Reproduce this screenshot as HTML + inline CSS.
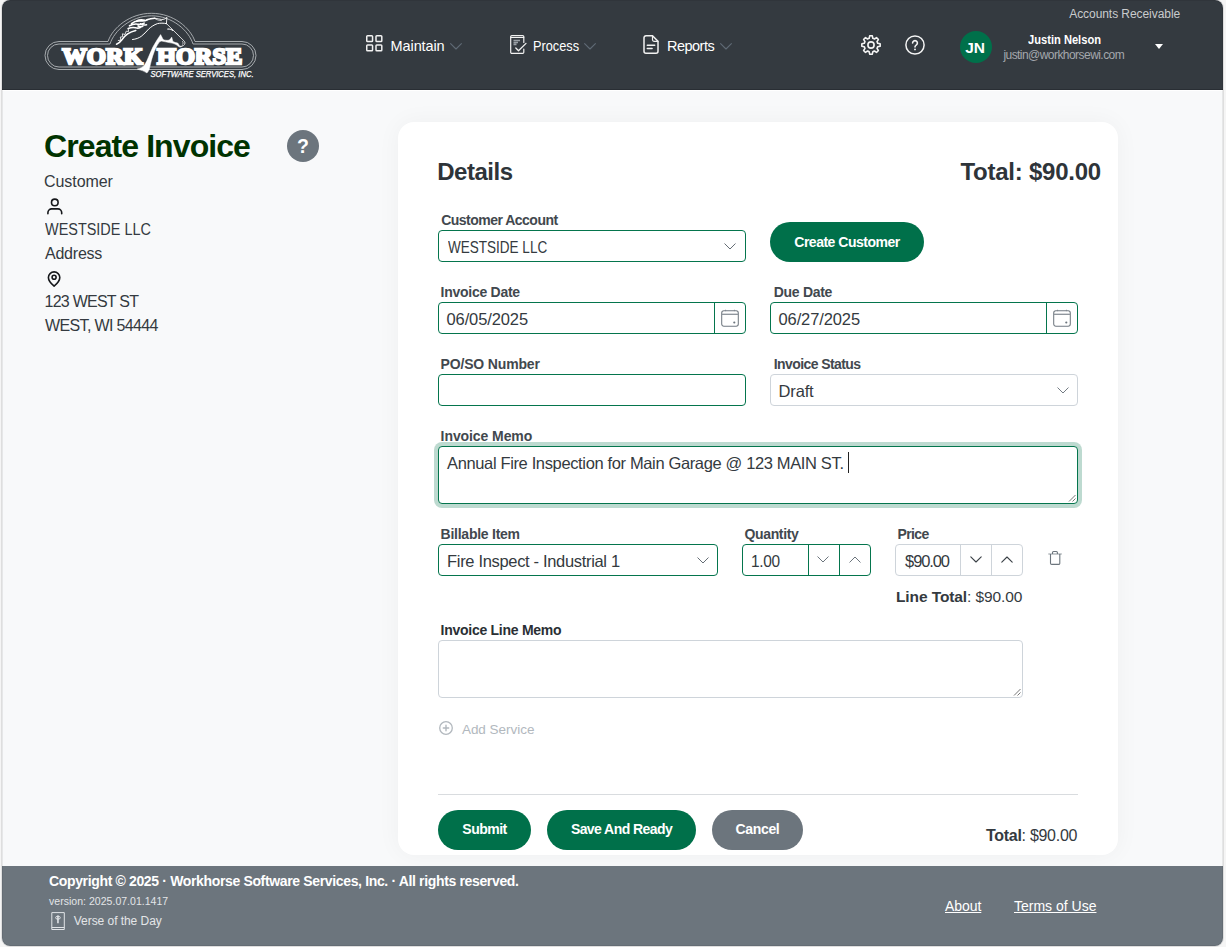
<!DOCTYPE html>
<html lang="en">
<head>
<meta charset="utf-8">
<title>Create Invoice</title>
<style>
*{box-sizing:border-box;margin:0;padding:0}
html,body{width:1226px;height:947px;overflow:hidden;background:#f5f5f5}
body{font-family:"Liberation Sans",sans-serif;color:#343a40;position:relative}
.abs{position:absolute}
.t{position:absolute;white-space:nowrap;line-height:1}
#win{position:absolute;left:2px;top:0;width:1221px;height:946px;background:#f8f9fa;border-radius:8px;overflow:hidden;box-shadow:0 0 0 1px rgba(0,0,0,.09)}
#hdr{position:absolute;left:2px;top:0;width:1221px;height:90px;background:#343a40;border-bottom:1px solid #292e34}
#ftr{position:absolute;left:2px;top:866px;width:1221px;height:80px;background:#6c757d}
#card{position:absolute;left:398px;top:122px;width:720px;height:733px;background:#fff;border-radius:16px;box-shadow:0 0 24px rgba(0,0,0,.045)}
.lbl{position:absolute;white-space:nowrap;line-height:1;font-size:14px;margin-top:0px;font-weight:bold;color:#42484e}
.box{position:absolute;height:32px;border:1px solid #04754d;border-radius:4px;background:#fff}
.box.g{border-color:#ced4da}
.val{position:absolute;white-space:nowrap;line-height:1;font-size:16.5px;margin-top:0.3px;color:#343a40}
.btn{position:absolute;height:40px;border-radius:20px;background:#00704a;color:#fff;font-weight:bold;font-size:14px;text-align:center;line-height:40px;white-space:nowrap}
.btn.gray{background:#6c757d}
.dv{position:absolute;top:0;width:1px;height:30px;background:#04754d}
.g .dv{background:#ced4da}
svg{position:absolute;overflow:visible}
.lp{font-size:16px;color:#343a40}
.nv{font-size:14.500px;color:#fff}
</style>
</head>
<body>
<div id="win"><div id="o" style="position:absolute;left:-2px;top:0;width:1226px;height:947px">
  <div id="hdr">
    <!-- LOGO -->
    <div id="ho" style="position:absolute;left:-2px;top:0;width:1226px;height:90px">
    <svg id="logo" style="left:0;top:0" width="300" height="90" viewBox="0 0 300 90">
      <g fill="none" stroke="#c3c6c9" stroke-width="0.8">
        <path d="M59 41.500H108C112.500 28 129.500 13.300 151.500 13.300S190.500 28 195 41.500H242a14 14 0 0 1 0 28H59a14 14 0 0 1 0-28z"/>
        <path d="M59 44H110C114 31 130.500 15.800 151.500 15.800S189 31 193 44H242a11.500 11.500 0 0 1 0 23H59a11.500 11.500 0 0 1 0-23z"/>
      </g>
      <text x="62.200" y="64" font-family="Liberation Serif" font-weight="bold" font-size="23.400" fill="#fff" stroke="#fff" stroke-width="2.400" stroke-linejoin="miter" textLength="80.600" lengthAdjust="spacingAndGlyphs">WORK</text>
      <text x="157" y="64" font-family="Liberation Serif" font-weight="bold" font-size="23.400" fill="#fff" stroke="#fff" stroke-width="2.400" stroke-linejoin="miter" textLength="85.200" lengthAdjust="spacingAndGlyphs">HORSE</text>
      <text x="150.500" y="77.200" font-family="Liberation Sans" font-style="italic" font-size="8.200" fill="#fff" stroke="#fff" stroke-width="0.250" textLength="103" lengthAdjust="spacingAndGlyphs">SOFTWARE SERVICES, INC.</text>
      <!-- horse -->
      <g fill="#fff" stroke="#fff" stroke-width="0.500" stroke-linejoin="round">
        <path d="M160.600 34.600L163.100 39.400C165 40.400 167.200 40.500 169.100 40.100C170.300 39.300 171.100 38.300 171.700 37.100L172.900 41.600C174.600 42.400 176.500 42.700 178 43.200L179.600 46C180.600 46.300 181.500 46.300 182.300 46L181 46.900C180.200 47.200 179.300 47.100 178.600 46.600C177.400 45.600 176.300 44.700 175 44.100C173.100 43.300 171.100 42.900 169.100 42.600C166.600 42.200 164.100 41.400 161.700 41.100C160.400 41.200 159.500 41.800 158.800 42.700C156.900 45.400 155.500 48.400 154.300 51.500C153.100 54.500 152.200 57.400 151.400 60.400C150.600 63.300 149.900 66.200 149.300 69.100C148.800 70.600 148.100 71.900 147 72.900C144.200 71.200 140.900 70 137.300 69.100C140.200 68.600 143 67.300 144.700 64.700C146.300 62.400 147.400 59.900 148.400 57.300C149.800 53.800 151.300 50.400 152.900 47C154.300 44.500 155.800 42 157.300 39.600C158.500 37.900 159.600 36.200 160.600 34.600z"/>
      </g>
      <g fill="none" stroke="#fff" stroke-linecap="round" stroke-linejoin="round">
        <path d="M132.500 39.500C136 39.200 138.800 38 141.200 36.400C144 34.400 146.200 31.600 148.600 29.100C151.200 26.700 154.100 24.800 157.500 23.600C160.300 23 163.400 23 166.400 23.600" stroke-width="1"/>
        <path d="M166.500 23.600L184.400 41.300C185.200 42.300 185.100 43.700 184.300 44.700C183.800 45.400 183.100 45.900 182.300 46" stroke-width="0.800"/>
        <path d="M182.600 41.400C183.300 42.200 183.300 43.300 182.700 44.200" stroke-width="0.700"/>
        <path d="M166.400 23.800L166.900 17.400C165.500 18.800 163.600 19.600 161.700 19.500C159.400 19.100 157.200 18.600 154.900 18.300" stroke-width="0.900"/>
        <path d="M167.800 29.100C169.500 28.800 171.300 29.200 172.700 30.400" stroke-width="1.100"/>
        <path d="M116.500 44.300C118.800 43.300 120.400 41.800 121.700 40C123.300 37.600 125.200 35.600 127.600 33.900C130 32.300 132.700 31.100 135.800 30.400" stroke-width="1.500"/>
        <path d="M118.300 40.500L120.800 40.200L120.300 37L122.600 36.800L122.400 33.800L125 34.500L126.200 31.200L128.600 31.500L128.200 28.500" stroke-width="0.800"/>
        <path d="M128.200 28.400C130.600 27.600 133.200 27.300 135.600 27.800C137.300 28.300 139.100 28.100 140.600 27.200M129.500 25.800C132 24.400 134.900 23.700 137.800 24.200C140 24.600 142.300 24.200 144.200 23.100M131.500 23.500C134 21.500 137.300 20.600 140.500 20.900C142.900 21.300 145.300 21 147.500 19.900M136.500 21C139 19.700 142.200 19.500 145 20.300M146.800 19.800C149.400 19 152.200 18.500 154.900 18.300M140.700 23.800C142.400 25 144.500 25.300 146.500 24.700M138 26C139.500 26.800 141.200 26.800 142.700 26.200" stroke-width="1.600"/>
        <path d="M154.600 18.400C156.700 19.800 158.900 20.600 161.500 20.600" stroke-width="0.700"/>
      </g>
    </svg>
    <!-- NAV -->
    <svg style="left:366px;top:35px" width="17" height="17" viewBox="0 0 17 17" fill="none" stroke="#f1f1f1" stroke-width="1.500"><rect x="0.750" y="0.750" width="5.800" height="5.800" rx="0.800"/><rect x="10" y="0.750" width="5.800" height="5.800" rx="0.800"/><rect x="0.750" y="10" width="5.800" height="5.800" rx="0.800"/><rect x="10" y="10" width="5.800" height="5.800" rx="0.800"/></svg>
    <div class="t nv" id="n1" style="left:390.6px;top:39px;letter-spacing:-0.11px">Maintain</div>
    <svg style="left:450px;top:43px" width="12" height="7" viewBox="0 0 12 7" fill="none" stroke="#5f6a75" stroke-width="1.1" stroke-linecap="round" stroke-linejoin="round"><path d="M0.600 0.600L6 6l5.400-5.400"/></svg>
    <svg style="left:510px;top:35px" width="17" height="19" viewBox="0 0 17 19" fill="none" stroke="#f1f1f1" stroke-width="1.200" stroke-linecap="round" stroke-linejoin="round"><path d="M13.800 7.500V1.800a1.100 1.100 0 0 0-1.100-1.100H1.800a1.100 1.100 0 0 0-1.100 1.100v15.400a1.100 1.100 0 0 0 1.100 1.100h10.900a1.100 1.100 0 0 0 1.100-1.100V14"/><path d="M0.700 2.500h13.100" stroke-width="1"/><path d="M3.500 5.500h6.500M3.500 7.500h4.500M3.500 9.300h3" stroke="#9aa0a6" stroke-width="1.700" stroke-linecap="butt"/><path d="M5.800 13l2.700 2.700l7.500-7.300" stroke-width="1.300"/></svg>
    <div class="t nv" id="n2" style="left:532.5px;top:39px;transform-origin:0 50%;transform:scaleX(0.8806)">Process</div>
    <svg style="left:584px;top:43px" width="12" height="7" viewBox="0 0 12 7" fill="none" stroke="#5f6a75" stroke-width="1.1" stroke-linecap="round" stroke-linejoin="round"><path d="M0.600 0.600L6 6l5.400-5.400"/></svg>
    <svg style="left:643px;top:35px" width="16" height="19" viewBox="0 0 16 19" fill="none" stroke="#f1f1f1" stroke-width="1.500" stroke-linecap="round" stroke-linejoin="round"><path d="M9.500 0.800H3a2 2 0 0 0-2 2v13.400a2 2 0 0 0 2 2h10a2 2 0 0 0 2-2V6.300z"/><path d="M9.500 0.800v4a1.500 1.500 0 0 0 1.500 1.500h4" stroke-width="1.200"/><path d="M4.300 10.200h7.400M4.300 13.600h4.800" stroke-width="1.500"/></svg>
    <div class="t nv" id="n3" style="left:667.0px;top:39px;letter-spacing:-0.52px">Reports</div>
    <svg style="left:720px;top:43px" width="12" height="7" viewBox="0 0 12 7" fill="none" stroke="#5f6a75" stroke-width="1.1" stroke-linecap="round" stroke-linejoin="round"><path d="M0.600 0.600L6 6l5.400-5.400"/></svg>
    <!-- USER -->
    <svg style="left:861px;top:35px" width="20" height="20" viewBox="0 0 20 20" fill="none" stroke="#f4f4f4" stroke-width="1.600" stroke-linejoin="round"><path d="M8.18 3.34L8.70 0.89A9.20 9.20 0 0 1 11.30 0.89L11.82 3.34A6.90 6.90 0 0 1 13.42 4.01L15.52 2.64A9.20 9.20 0 0 1 17.36 4.48L15.99 6.58A6.90 6.90 0 0 1 16.66 8.18L19.11 8.70A9.20 9.20 0 0 1 19.11 11.30L16.66 11.82A6.90 6.90 0 0 1 15.99 13.42L17.36 15.52A9.20 9.20 0 0 1 15.52 17.36L13.42 15.99A6.90 6.90 0 0 1 11.82 16.66L11.30 19.11A9.20 9.20 0 0 1 8.70 19.11L8.18 16.66A6.90 6.90 0 0 1 6.58 15.99L4.48 17.36A9.20 9.20 0 0 1 2.64 15.52L4.01 13.42A6.90 6.90 0 0 1 3.34 11.82L0.89 11.30A9.20 9.20 0 0 1 0.89 8.70L3.34 8.18A6.90 6.90 0 0 1 4.01 6.58L2.64 4.48A9.20 9.20 0 0 1 4.48 2.64L6.58 4.01A6.90 6.90 0 0 1 8.18 3.34Z"/><circle cx="10" cy="10" r="3.100"/></svg>
    <svg style="left:905px;top:35px" width="20" height="20" viewBox="0 0 20 20" fill="none" stroke="#f4f4f4" stroke-width="1.500" stroke-linecap="round"><circle cx="10" cy="10" r="9.100"/><path d="M7.600 8a2.400 2.400 0 1 1 3.600 2.100c-0.800 0.500-1.200 0.900-1.200 1.900" stroke-width="1.600"/><circle cx="10" cy="14.400" r="0.950" fill="#f4f4f4" stroke="none"/></svg>
    <div class="abs" style="left:960px;top:31px;width:32px;height:32px;border-radius:16px;background:#00704a"></div>
    <div class="t" id="jn" style="left:965.300px;top:40px;font-size:15.500px;font-weight:bold;color:#fff;letter-spacing:-0.2px">JN</div>
    <div class="t" id="u0" style="left:1069.2px;top:8px;font-size:12px;color:#c9cbcd;letter-spacing:-0.06px">Accounts Receivable</div>
    <div class="t" id="u1" style="left:1028.2px;top:33px;font-size:13px;font-weight:bold;color:#fff;transform-origin:0 50%;transform:scaleX(0.8565)">Justin Nelson</div>
    <div class="t" id="u2" style="left:1003.4px;top:49px;font-size:12px;color:#a4a8ad;letter-spacing:-0.55px">justin@workhorsewi.com</div>
    <svg style="left:1155px;top:44px" width="8" height="5" viewBox="0 0 8 5"><path d="M0 0h8L4 5z" fill="#fff"/></svg>
    </div>
  </div>

  <!-- LEFT -->
  <div class="t" id="h1" style="left:44.1px;top:130px;font-size:32px;font-weight:bold;color:#003300;letter-spacing:-0.92px">Create Invoice</div>
  <div class="abs" style="left:287px;top:130px;width:32px;height:32px;border-radius:16px;background:#6c757d"></div>
  <div class="t" id="q1" style="left:296.900px;top:137px;font-size:19.500px;font-weight:bold;color:#fff">?</div>
  <div class="t lp" id="l1" style="left:44.0px;top:174px;letter-spacing:-0.06px">Customer</div>
  <svg style="left:0;top:0" width="100" height="300" viewBox="0 0 100 300" fill="none" stroke="#16181b" stroke-width="1.600" stroke-linecap="round" stroke-linejoin="round"><circle cx="54.800" cy="202.400" r="3.300"/><path d="M47.900 213.800v-1.100a3.800 3.800 0 0 1 3.800-3.800h6.200a3.800 3.800 0 0 1 3.800 3.800v1.100"/></svg>
  <div class="t lp" id="l2" style="left:44.6px;top:222px;transform-origin:0 50%;transform:scaleX(0.9026)">WESTSIDE LLC</div>
  <div class="t lp" id="l3" style="left:45.0px;top:246px;letter-spacing:-0.23px">Address</div>
  <svg style="left:0;top:0" width="100" height="300" viewBox="0 0 100 300" fill="none" stroke="#16181b" stroke-width="1.600" stroke-linecap="round" stroke-linejoin="round"><path d="M54.100 286.200C54.100 286.200 48.400 281.600 48.400 277.600a5.700 5.700 0 0 1 11.400 0C59.800 281.600 54.100 286.200 54.100 286.200z"/><circle cx="54.100" cy="277.300" r="2"/></svg>
  <div class="t lp" id="l4" style="left:44.6px;top:294px;letter-spacing:-0.76px">123 WEST ST</div>
  <div class="t lp" id="l5" style="left:45.0px;top:318px;letter-spacing:-0.64px">WEST, WI 54444</div>

  <div id="card">
    <!-- FORM -->
    <div id="ci" style="position:absolute;left:-398px;top:-122px;width:1226px;height:947px">
    <div class="t" id="c1" style="left:437.2px;top:160px;font-size:24px;font-weight:bold;color:#2e3439;letter-spacing:-0.47px">Details</div>
    <div class="t" id="c2" style="left:960.4px;top:160px;font-size:24px;font-weight:bold;color:#2e3439;letter-spacing:-0.24px">Total: $90.00</div>

    <div class="lbl" id="b1" style="left:441.2px;top:213px;letter-spacing:-0.52px">Customer Account</div>
    <div class="box" style="left:438px;top:230px;width:308px"></div>
    <div class="val" id="v1" style="left:447.8px;top:239px;transform-origin:0 50%;transform:scaleX(0.8194)">WESTSIDE LLC</div>
    <svg style="left:724.4px;top:242.6px" width="12" height="7" viewBox="0 0 12 7" fill="none" stroke="#656d75" stroke-width="1" stroke-linecap="round" stroke-linejoin="round"><path d="M0.800 0.800L6 6l5.200-5.200"/></svg>
    <div class="btn" id="bt1" style="left:770px;top:222px;width:154px;letter-spacing:-0.49px">Create Customer</div>

    <div class="lbl" id="b2" style="left:440.6px;top:285px;letter-spacing:-0.27px">Invoice Date</div>
    <div class="box" style="left:438px;top:302px;width:308px"><div class="dv" style="left:275px"></div></div>
    <div class="val" id="v2" style="left:446.5px;top:311px;letter-spacing:-0.11px">06/05/2025</div>
    <svg style="left:721px;top:309px" width="18" height="18" viewBox="0 0 18 18" fill="none" stroke="#727a82" stroke-width="1.050" stroke-linecap="round"><rect x="0.700" y="1.800" width="16.600" height="15.500" rx="2.200"/><path d="M0.700 5.300h16.600" stroke="#8a9198" stroke-width="1.300" stroke-linecap="butt"/><path d="M4.600 0.900v0.900M13.400 0.900v0.900" stroke-opacity="0.600"/><circle cx="13.300" cy="13.500" r="1.100" fill="#6c757d" stroke="none"/></svg>
    <div class="lbl" id="b3" style="left:773.8px;top:285px;letter-spacing:-0.31px">Due Date</div>
    <div class="box" style="left:770px;top:302px;width:308px"><div class="dv" style="left:275px"></div></div>
    <div class="val" id="v3" style="left:778.5px;top:311px;letter-spacing:-0.11px">06/27/2025</div>
    <svg style="left:1053px;top:309px" width="18" height="18" viewBox="0 0 18 18" fill="none" stroke="#727a82" stroke-width="1.050" stroke-linecap="round"><rect x="0.700" y="1.800" width="16.600" height="15.500" rx="2.200"/><path d="M0.700 5.300h16.600" stroke="#8a9198" stroke-width="1.300" stroke-linecap="butt"/><path d="M4.600 0.900v0.900M13.400 0.900v0.900" stroke-opacity="0.600"/><circle cx="13.300" cy="13.500" r="1.100" fill="#6c757d" stroke="none"/></svg>

    <div class="lbl" id="b4" style="left:440.6px;top:357px;letter-spacing:-0.17px">PO/SO Number</div>
    <div class="box" style="left:438px;top:374px;width:308px"></div>
    <div class="lbl" id="b5" style="left:773.8px;top:357px;letter-spacing:-0.59px">Invoice Status</div>
    <div class="box g" style="left:770px;top:374px;width:308px"></div>
    <div class="val" id="v5" style="left:778.6px;top:383px;letter-spacing:-0.18px">Draft</div>
    <svg style="left:1056.6px;top:386.7px" width="12" height="7" viewBox="0 0 12 7" fill="none" stroke="#737b83" stroke-width="1" stroke-linecap="round" stroke-linejoin="round"><path d="M0.800 0.800L6 6l5.200-5.200"/></svg>

    <div class="lbl" id="b6" style="left:440.6px;top:429px;letter-spacing:-0.08px">Invoice Memo</div>
    <div class="box" style="left:438px;top:446px;width:640px;height:58px;box-shadow:0 0 0 4px rgba(0,112,74,.26)"></div>
    <div class="val" id="v6" style="left:447.000px;top:455px;letter-spacing:-0.36px">Annual Fire Inspection for Main Garage @ 123 MAIN ST.</div>
    <div class="abs" style="left:847.500px;top:452px;width:1px;height:21px;background:#222"></div>
    <svg style="left:1068px;top:494px" width="8" height="8" viewBox="0 0 8 8" stroke="#777" stroke-width="1" fill="none"><path d="M7.500 1L1 7.500M7.500 4.500L4.500 7.500"/></svg>

    <div class="lbl" id="b7" style="left:440.6px;top:527px;letter-spacing:-0.25px">Billable Item</div>
    <div class="box" style="left:438px;top:544px;width:280px"></div>
    <div class="val" id="v7" style="left:447.1px;top:553px;letter-spacing:-0.33px">Fire Inspect - Industrial 1</div>
    <svg style="left:696.7px;top:556.6px" width="12" height="7" viewBox="0 0 12 7" fill="none" stroke="#656d75" stroke-width="1" stroke-linecap="round" stroke-linejoin="round"><path d="M0.800 0.800L6 6l5.200-5.200"/></svg>
    <div class="lbl" id="b8" style="left:744.5px;top:527px;letter-spacing:-0.36px">Quantity</div>
    <div class="box" style="left:742px;top:544px;width:129px"><div class="dv" style="left:65px"></div><div class="dv" style="left:96px"></div></div>
    <div class="val" id="v8" style="left:751.2px;top:553px;letter-spacing:-0.34px;transform-origin:0 50%;transform:scaleX(0.9358)">1.00</div>
    <svg style="left:817.4px;top:556.4px" width="12" height="7" viewBox="0 0 12 7" fill="none" stroke="#6c757d" stroke-width="1" stroke-linecap="round" stroke-linejoin="round"><path d="M0.800 0.800L6 6l5.200-5.200"/></svg>
    <svg style="left:848.5px;top:556.0px" width="12" height="7" viewBox="0 0 12 7" fill="none" stroke="#6c757d" stroke-width="1" stroke-linecap="round" stroke-linejoin="round"><path d="M0.800 6.200L6 1l5.200 5.200"/></svg>
    <div class="lbl" id="b9" style="left:897.6px;top:527px;letter-spacing:-0.65px">Price</div>
    <div class="box g" style="left:895px;top:544px;width:128px"><div class="dv" style="left:64px"></div><div class="dv" style="left:95px"></div></div>
    <div class="val" id="v9" style="left:905.1px;top:553px;letter-spacing:-1.14px">$90.00</div>
    <svg style="left:970.0px;top:556.4px" width="12" height="7" viewBox="0 0 12 7" fill="none" stroke="#3a4046" stroke-width="1.1" stroke-linecap="round" stroke-linejoin="round"><path d="M0.800 0.800L6 6l5.200-5.200"/></svg>
    <svg style="left:1001.0px;top:556.0px" width="12" height="7" viewBox="0 0 12 7" fill="none" stroke="#3a4046" stroke-width="1.1" stroke-linecap="round" stroke-linejoin="round"><path d="M0.800 6.200L6 1l5.200 5.200"/></svg>
    <svg style="left:1040px;top:540px" width="30" height="30" viewBox="1040 540 30 30" fill="none" stroke="#6c757d" stroke-width="1.100" stroke-linejoin="round"><path d="M1048.300 554h13.500" stroke-opacity="0.750" stroke-width="1"/><path d="M1050.500 554v9.200a1.200 1.200 0 0 0 1.200 1.200h6.900a1.200 1.200 0 0 0 1.200-1.200V554"/><path d="M1052.500 554v-1.500a1 1 0 0 1 1-1h2.900a1 1 0 0 1 1 1v1.500"/></svg>
    <div class="t" id="lt" style="left:896.0px;top:589px;font-size:15.500px;color:#343a40;letter-spacing:-0.10px"><b>Line Total</b>: $90.00</div>

    <div class="lbl" id="b10" style="color:#2a2f34;left:440.6px;top:623px;letter-spacing:-0.27px">Invoice Line Memo</div>
    <div class="box g" style="left:438px;top:640px;width:585px;height:58px"></div>
    <svg style="left:1013px;top:688px" width="8" height="8" viewBox="0 0 8 8" stroke="#777" stroke-width="1" fill="none"><path d="M7.500 1L1 7.500M7.500 4.500L4.500 7.500"/></svg>

    <svg style="left:439.200px;top:721.300px" width="14" height="14" viewBox="0 0 14 14" fill="none" stroke="#b2b8be" stroke-width="1.300" stroke-linecap="round"><circle cx="7" cy="7" r="6.300"/><path d="M7 4.300v5.400M4.300 7h5.400" stroke-width="1.400"/></svg>
    <div class="t" id="as" style="left:461.9px;top:722.500px;font-size:13.500px;color:#b2b8be;letter-spacing:-0.02px">Add Service</div>

    <div class="abs" style="left:438px;top:794px;width:640px;height:1px;background:#d9dcdf"></div>
    <div class="btn" id="bt2" style="line-height:38px;left:438px;top:810px;width:93px;letter-spacing:-0.52px">Submit</div>
    <div class="btn" id="bt3" style="line-height:38px;left:547px;top:810px;width:149px;letter-spacing:-0.57px">Save And Ready</div>
    <div class="btn gray" id="bt4" style="line-height:38px;left:712px;top:810px;width:91px;letter-spacing:-0.36px">Cancel</div>
    <div class="t" id="tt" style="left:986.0px;top:828px;font-size:16px;color:#343a40;letter-spacing:-0.29px"><b>Total</b>: $90.00</div>
    </div>
  </div>

  <div class="abs" style="left:2px;top:90px;width:1221px;height:1px;background:#fff"></div>
  <div id="ftr">
    <!-- FOOTER -->
    <div class="t" id="f1" style="left:47.0px;top:8px;font-size:14px;font-weight:bold;color:#fff;letter-spacing:-0.35px">Copyright © 2025 · Workhorse Software Services, Inc. · All rights reserved.</div>
    <div class="t" id="f2" style="left:47.0px;top:30px;font-size:10.5px;color:#e3e5e8;letter-spacing:0.03px">version: 2025.07.01.1417</div>
    <svg style="left:0;top:0" width="80" height="80" viewBox="0 0 80 80" fill="none" stroke="#e1e4e7" stroke-width="1"><path d="M49.800 46.600h12.500v16.900h-12.500z"/><path d="M49.800 61.500h12.500"/><ellipse cx="55.950" cy="51.700" rx="2.300" ry="1.500"/><path d="M55.950 49.600v7.700" stroke-width="1.600"/></svg>
    <div class="t" id="f3" style="left:71.8px;top:49px;font-size:12px;color:#e3e5e8;letter-spacing:-0.05px">Verse of the Day</div>
    <div class="t" id="f4" style="left:943.0px;top:33px;font-size:14px;color:#fff;text-decoration:underline;letter-spacing:-0.06px">About</div>
    <div class="t" id="f5" style="left:1012px;top:33px;font-size:14px;color:#fff;text-decoration:underline">Terms of Use</div>
  </div>
</div>
<div class="abs" style="left:0;top:0;width:1221px;height:946px;border:1px solid rgba(0,0,0,.07);border-radius:8px"></div>
</div>
</body>
</html>
